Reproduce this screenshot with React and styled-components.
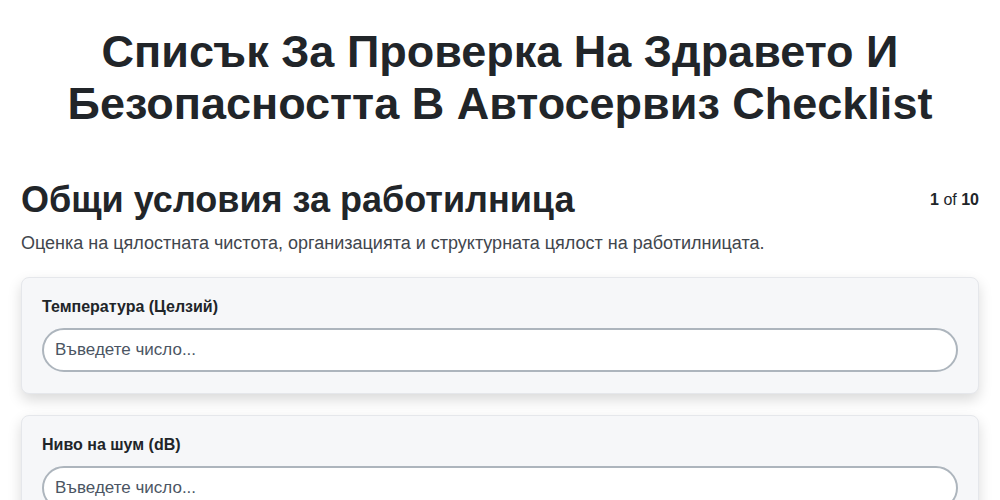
import React from 'react';
import styled, { createGlobalStyle } from 'styled-components';

const GlobalStyle = createGlobalStyle`
  body {
    margin: 0;
    background: #ffffff;
    font-family: "Liberation Sans", Arial, sans-serif;
    color: #212529;
  }
`;

const Page = styled.main`
  padding: 26px 21px 40px;
`;

const Title = styled.h1`
  margin: 0 0 48px;
  text-align: center;
  font-size: 45px;
  line-height: 52px;
  font-weight: 700;
  color: #212529;
`;

const SectionHead = styled.div`
  display: flex;
  justify-content: space-between;
  align-items: center;
`;

const SectionTitle = styled.h2`
  margin: 0;
  font-size: 36px;
  line-height: 44px;
  font-weight: 700;
`;

const Counter = styled.div`
  font-size: 16px;
  color: #212529;
  b { font-weight: 700; }
`;

const Description = styled.p`
  margin: 9px 0 22px;
  font-size: 18px;
  line-height: 24px;
  color: #41464d;
`;

const Card = styled.section`
  background: #f6f7f9;
  border: 1px solid #e5e7eb;
  border-radius: 8px;
  padding: 18px 20px 21px;
  margin-bottom: 21px;
  box-shadow: 0 6px 14px rgba(0, 0, 0, 0.15);
`;

const Label = styled.label`
  display: block;
  font-size: 16px;
  line-height: 22px;
  font-weight: 700;
  margin-bottom: 10px;
`;

const NumberInput = styled.input`
  box-sizing: border-box;
  width: 100%;
  height: 44px;
  padding: 0 11px;
  border: 2px solid #adb5bd;
  border-radius: 22px;
  background: #ffffff;
  font-family: inherit;
  font-size: 17px;
  color: #212529;
  outline: none;
  &::placeholder { color: #4b5563; }
`;

const fields = [
  { id: 'temp', label: 'Температура (Целзий)' },
  { id: 'noise', label: 'Ниво на шум (dB)' },
];

export default function App() {
  return (
    <>
      <GlobalStyle />
      <Page>
        <Title>Списък За Проверка На Здравето И Безопасността В Автосервиз Checklist</Title>
        <SectionHead>
          <SectionTitle>Общи условия за работилница</SectionTitle>
          <Counter><b>1</b> of <b>10</b></Counter>
        </SectionHead>
        <Description>Оценка на цялостната чистота, организацията и структурната цялост на работилницата.</Description>
        {fields.map(f => (
          <Card key={f.id}>
            <Label htmlFor={f.id}>{f.label}</Label>
            <NumberInput id={f.id} type="number" placeholder="Въведете число..." />
          </Card>
        ))}
      </Page>
    </>
  );
}
